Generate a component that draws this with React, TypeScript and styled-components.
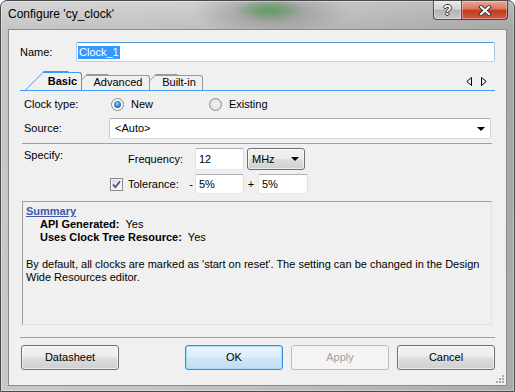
import React from "react";
import styled, { createGlobalStyle } from "styled-components";

const GlobalStyle = createGlobalStyle`
  html, body {
    margin: 0;
    padding: 0;
    background: #ffffff;
  }
  body {
    font-family: "Liberation Sans", Arial, sans-serif;
    font-size: 11px;
    line-height: 13px;
    color: #000;
  }
  * {
    box-sizing: border-box;
  }
`;

const Window = styled.div`
  width: 515px;
  height: 392px;
  display: flex;
  flex-direction: column;
  border: 1px solid #4a4a4a;
  border-radius: 7px 7px 0 0;
  overflow: hidden;
  background:
    radial-gradient(36px 11px at 268px 9px, rgba(86, 160, 86, 0.8), rgba(86, 160, 86, 0) 100%),
    radial-gradient(80px 26px at 270px 10px, rgba(70, 70, 70, 0.4), rgba(70, 70, 70, 0) 100%),
    linear-gradient(90deg, rgba(255, 255, 255, 0.12) 0%, rgba(255, 255, 255, 0) 45%, rgba(0, 0, 0, 0.12) 100%),
    linear-gradient(180deg, #d0d0d0 0px, #bdbdbd 30px, #c1c1c1 100%);
  box-shadow: inset 0 0 0 1px rgba(255, 255, 255, 0.35);
`;

const TitleBar = styled.div`
  flex: none;
  height: 28px;
  display: flex;
  justify-content: space-between;
  align-items: flex-start;
`;

const Title = styled.div`
  padding: 6px 0 0 7px;
  font-size: 12px;
  line-height: 14px;
  color: #000;
`;

const CaptionButtons = styled.div`
  display: flex;
  margin-right: 6px;
`;

const CaptionButton = styled.div<{ $close?: boolean }>`
  width: ${(p) => (p.$close ? 46 : 29)}px;
  height: 19px;
  display: flex;
  align-items: center;
  justify-content: center;
  border: 1px solid rgba(45, 45, 45, 0.8);
  border-top: none;
  border-left: ${(p) => (p.$close ? "none" : "1px solid rgba(45, 45, 45, 0.8)")};
  border-radius: ${(p) => (p.$close ? "0 0 4px 0" : "0 0 0 4px")};
  background: ${(p) =>
    p.$close
      ? "linear-gradient(180deg, #e9a896 0%, #d9735d 45%, #c13a20 52%, #cf5a43 100%)"
      : "linear-gradient(180deg, #e8e8e8 0%, #d3d3d3 45%, #b3b3b3 52%, #c9c9c9 100%)"};
  box-shadow: inset 0 0 0 1px rgba(255, 255, 255, 0.35);
  color: #fff;
  font-weight: 700;
  font-size: 14px;
  text-shadow: 1px 0 0 #333, -1px 0 0 #333, 0 1px 0 #333, 0 -1px 0 #333;
`;

const Client = styled.div`
  position: relative;
  flex: 1;
  margin: 0 7px 5px 7px;
  border: 1px solid #8c8c8c;
  background: #f0f0f0;
  display: flex;
  flex-direction: column;
`;

const NameRow = styled.div`
  display: flex;
  align-items: center;
  height: 20px;
  margin: 12px 0 0 11px;
`;

const NameLabel = styled.div`
  width: 56px;
`;

const TextBox = styled.div<{ $w?: number; $h?: number; $focus?: boolean; $pad?: number }>`
  width: ${(p) => (p.$w ? `${p.$w}px` : "auto")};
  flex: ${(p) => (p.$w ? "none" : 1)};
  height: ${(p) => p.$h ?? 20}px;
  display: flex;
  align-items: center;
  padding-left: ${(p) => p.$pad ?? 3}px;
  background: #fff;
  border: 1px solid;
  border-color: ${(p) =>
    p.$focus ? "#5b9bd5 #a8cbec #b7d4ee #a8cbec" : "#abadb3 #dbdfe6 #e3e9ef #e2e3ea"};
  border-radius: 2px;
`;

const Selected = styled.span`
  background: #3399ff;
  color: #fff;
  padding: 0 1px;
`;

const TabStrip = styled.div`
  display: flex;
  align-items: flex-end;
  width: 475px;
  height: 19px;
  margin: 10px 0 0 11px;
  padding-left: 5px;
  border-bottom: 1px solid #3d9cf0;
`;

const Tab = styled.div<{ $active?: boolean; $w: number; $h: number; $z: number; $ml: number }>`
  position: relative;
  z-index: ${(p) => p.$z};
  width: ${(p) => p.$w}px;
  height: ${(p) => p.$h}px;
  margin-left: ${(p) => p.$ml}px;
  padding-left: ${(p) => p.$h}px;
  padding-top: ${(p) => (p.$active ? 1 : 0)}px;
  display: flex;
  align-items: center;
  justify-content: center;
  font-weight: ${(p) => (p.$active ? 700 : 400)};

  &::before {
    content: "";
    position: absolute;
    left: 0;
    bottom: 0;
    width: ${(p) => p.$h + 6}px;
    height: 100%;
    background: #f0f0f0;
    border-left: 1px solid ${(p) => (p.$active ? "#3d9cf0" : "#9a9a9a")};
    border-top: 1px solid ${(p) => (p.$active ? "#3d9cf0" : "#9a9a9a")};
    transform-origin: bottom left;
    transform: skewX(-45deg);
  }

  &::after {
    content: "";
    position: absolute;
    top: 0;
    bottom: 0;
    left: ${(p) => p.$h}px;
    right: 0;
    background: #f0f0f0;
    border-top: 1px solid ${(p) => (p.$active ? "#3d9cf0" : "#9a9a9a")};
    border-right: 1px solid ${(p) => (p.$active ? "#3d9cf0" : "#9a9a9a")};
    border-top-right-radius: 3px;
  }
`;

const TabText = styled.span`
  position: relative;
  z-index: 1;
`;

const TabArrows = styled.div`
  display: flex;
  gap: 9px;
  margin-left: auto;
  margin-right: 8px;
  align-self: center;
`;

const Section = styled.div<{ $m?: string }>`
  display: flex;
  flex-direction: column;
  margin: ${(p) => p.$m ?? "0 14px 0 13px"};
`;

const FormRow = styled.div<{ $h: number; $mt: number }>`
  display: flex;
  align-items: center;
  height: ${(p) => p.$h}px;
  margin-top: ${(p) => p.$mt}px;
  padding-left: 2px;
`;

const FieldLabel = styled.div`
  width: 85px;
  flex: none;
`;

const RadioOption = styled.div<{ $w?: number }>`
  display: flex;
  align-items: center;
  gap: 7px;
  width: ${(p) => (p.$w ? `${p.$w}px` : "auto")};
  margin-left: 2px;
`;

const Radio = styled.span<{ $checked?: boolean }>`
  position: relative;
  width: 13px;
  height: 13px;
  border-radius: 50%;
  border: 1px solid #8a8a8a;
  background: ${(p) =>
    p.$checked
      ? "radial-gradient(circle at 50% 50%, #ffffff 0%, #f2f2f2 100%)"
      : "radial-gradient(circle at 50% 50%, #f4f4f4 0%, #e6e6e6 55%, #cfcfcf 100%)"};

  &::after {
    content: "";
    display: ${(p) => (p.$checked ? "block" : "none")};
    position: absolute;
    left: 2px;
    top: 2px;
    width: 7px;
    height: 7px;
    border-radius: 50%;
    background: radial-gradient(circle at 45% 40%, #9fd2ff 0%, #3b86c9 45%, #154f87 100%);
  }
`;

const Caret = styled.span`
  width: 0;
  height: 0;
  border-left: 4px solid transparent;
  border-right: 4px solid transparent;
  border-top: 4px solid #000;
  margin-left: auto;
  margin-right: 5px;
`;

const ComboBox = styled.div`
  flex: 1;
  height: 21px;
  display: flex;
  align-items: center;
  padding-left: 5px;
  margin-right: 1px;
  background: #fff;
  border: 1px solid;
  border-color: #acacac #d5d5d5 #dadada #c9c9c9;
  border-radius: 2px;
`;

const Separator = styled.div<{ $mt: number }>`
  height: 1px;
  margin-top: ${(p) => p.$mt}px;
  background: #a0a0a0;
`;

const SpecifyBlock = styled.div`
  display: flex;
  margin-top: 4px;
  padding-left: 2px;
`;

const SpecifyLabel = styled.div`
  width: 86px;
  flex: none;
  padding-top: 1px;
`;

const SpecifyRows = styled.div`
  display: flex;
  flex-direction: column;
  gap: 4px;
`;

const SpecRow = styled.div<{ $h: number }>`
  display: flex;
  align-items: center;
  height: ${(p) => p.$h}px;
`;

const SpecLabel = styled.div<{ $w: number }>`
  width: ${(p) => p.$w}px;
  flex: none;
`;

const Sign = styled.div<{ $w: number }>`
  width: ${(p) => p.$w}px;
  flex: none;
  text-align: center;
`;

const Checkbox = styled.span`
  width: 13px;
  height: 13px;
  margin-right: 5px;
  display: flex;
  align-items: center;
  justify-content: center;
  border: 1px solid #8a8a8a;
  background: linear-gradient(135deg, #d6d6d6 0%, #f0f0f0 60%, #fdfdfd 100%);
  box-shadow: inset 0 0 0 1px #f6f6f6;
`;

const DropButton = styled.div`
  width: 58px;
  height: 22px;
  margin-left: 3px;
  display: flex;
  align-items: center;
  padding-left: 4px;
  border: 1px solid #707070;
  border-radius: 3px;
  background: linear-gradient(180deg, #f2f2f2 0%, #ebebeb 48%, #dddddd 52%, #cfcfcf 100%);
  box-shadow: inset 0 0 0 1px rgba(255, 255, 255, 0.6);
`;

const SummaryBox = styled.div`
  height: 124px;
  margin-top: 7px;
  padding: 3px 3px 0 3px;
  border: 1px solid;
  border-color: #a0a0a0 #e3e3e3 #e3e3e3 #a0a0a0;
`;

const SummaryTitle = styled.div`
  font-weight: 700;
  color: #3d5aa8;
  text-decoration: underline;
`;

const SummaryLine = styled.div`
  padding-left: 14px;
`;

const Strong = styled.span`
  font-weight: 700;
  margin-right: 6px;
`;

const Paragraph = styled.p`
  margin: 14px 0 0 0;
  max-width: 460px;
`;

const ButtonRow = styled.div`
  display: flex;
  align-items: center;
  margin: 7px 11px 0 12px;
`;

const ButtonGroup = styled.div`
  display: flex;
  gap: 8px;
  margin-left: auto;
`;

const Button = styled.div<{ $variant?: "default" | "disabled" }>`
  width: 98px;
  height: 25px;
  display: flex;
  align-items: center;
  justify-content: center;
  border-radius: 3px;
  border: 1px solid
    ${(p) => (p.$variant === "default" ? "#3c8fd6" : p.$variant === "disabled" ? "#b8bcbf" : "#707070")};
  color: ${(p) => (p.$variant === "disabled" ? "#a0a0a0" : "#000")};
  background: ${(p) =>
    p.$variant === "default"
      ? "linear-gradient(180deg, #eaf5fd 0%, #dcedfb 48%, #cde5f7 52%, #c1def5 100%)"
      : p.$variant === "disabled"
      ? "#f4f4f4"
      : "linear-gradient(180deg, #f2f2f2 0%, #ebebeb 48%, #dddddd 52%, #cfcfcf 100%)"};
  box-shadow: ${(p) =>
    p.$variant === "default"
      ? "inset 0 0 0 1px #a9dbf6"
      : p.$variant === "disabled"
      ? "none"
      : "inset 0 0 0 1px rgba(255, 255, 255, 0.6)"};
`;

const Grip = styled.svg`
  position: absolute;
  right: 1px;
  bottom: 1px;
`;

const CloseGlyph = () => (
  <svg width="14" height="11" viewBox="0 0 14 11">
    <path d="M3 2 L11 9 M11 2 L3 9" stroke="#3a3a3a" strokeWidth="4" strokeLinecap="square" />
    <path d="M3 2 L11 9 M11 2 L3 9" stroke="#ffffff" strokeWidth="2" strokeLinecap="square" />
  </svg>
);

const ArrowLeft = () => (
  <svg width="6" height="9" viewBox="0 0 6 9">
    <path d="M5.5 0.5 L0.8 4.5 L5.5 8.5 Z" fill="none" stroke="#000" strokeWidth="1" />
  </svg>
);

const ArrowRight = () => (
  <svg width="6" height="9" viewBox="0 0 6 9">
    <path d="M0.5 0.5 L5.2 4.5 L0.5 8.5 Z" fill="none" stroke="#000" strokeWidth="1" />
  </svg>
);

const CheckMark = () => (
  <svg width="9" height="9" viewBox="0 0 9 9">
    <path d="M1 4.5 L3.4 7.2 L8 1.2" fill="none" stroke="#40558a" strokeWidth="1.8" />
  </svg>
);

export default function App() {
  return (
    <>
      <GlobalStyle />
      <Window>
        <TitleBar>
          <Title>Configure 'cy_clock'</Title>
          <CaptionButtons>
            <CaptionButton>?</CaptionButton>
            <CaptionButton $close>
              <CloseGlyph />
            </CaptionButton>
          </CaptionButtons>
        </TitleBar>

        <Client>
          <NameRow>
            <NameLabel>Name:</NameLabel>
            <TextBox $w={419} $focus $pad={1}>
              <Selected>Clock_1</Selected>
            </TextBox>
          </NameRow>

          <TabStrip>
            <Tab $active $w={57} $h={18} $z={3} $ml={0}>
              <TabText>Basic</TabText>
            </Tab>
            <Tab $w={79} $h={15} $z={2} $ml={-11}>
              <TabText>Advanced</TabText>
            </Tab>
            <Tab $w={63} $h={15} $z={1} $ml={-10}>
              <TabText>Built-in</TabText>
            </Tab>
            <TabArrows>
              <ArrowLeft />
              <ArrowRight />
            </TabArrows>
          </TabStrip>

          <Section>
            <FormRow $h={20} $mt={3}>
              <FieldLabel>Clock type:</FieldLabel>
              <RadioOption $w={96}>
                <Radio $checked />
                <span>New</span>
              </RadioOption>
              <RadioOption>
                <Radio />
                <span>Existing</span>
              </RadioOption>
            </FormRow>

            <FormRow $h={21} $mt={4}>
              <FieldLabel>Source:</FieldLabel>
              <ComboBox>
                &lt;Auto&gt;
                <Caret />
              </ComboBox>
            </FormRow>

            <Separator $mt={4} />

            <SpecifyBlock>
              <SpecifyLabel>Specify:</SpecifyLabel>
              <SpecifyRows>
                <SpecRow $h={22}>
                  <SpecLabel $w={18} />
                  <SpecLabel $w={67}>Frequency:</SpecLabel>
                  <TextBox $w={49} $h={22}>12</TextBox>
                  <DropButton>
                    MHz
                    <Caret />
                  </DropButton>
                </SpecRow>
                <SpecRow $h={20}>
                  <Checkbox>
                    <CheckMark />
                  </Checkbox>
                  <SpecLabel $w={59}>Tolerance:</SpecLabel>
                  <Sign $w={8}>-</Sign>
                  <TextBox $w={49}>5%</TextBox>
                  <Sign $w={14}>+</Sign>
                  <TextBox $w={50}>5%</TextBox>
                </SpecRow>
              </SpecifyRows>
            </SpecifyBlock>

            <SummaryBox>
              <SummaryTitle>Summary</SummaryTitle>
              <SummaryLine>
                <Strong>API Generated:</Strong>Yes
              </SummaryLine>
              <SummaryLine>
                <Strong>Uses Clock Tree Resource:</Strong>Yes
              </SummaryLine>
              <Paragraph>
                By default, all clocks are marked as 'start on reset'. The setting can be changed in the
                Design Wide Resources editor.
              </Paragraph>
            </SummaryBox>
          </Section>

          <Section $m="12px 11px 0 11px">
            <Separator $mt={0} />
          </Section>

          <ButtonRow>
            <Button>Datasheet</Button>
            <ButtonGroup>
              <Button $variant="default">OK</Button>
              <Button $variant="disabled">Apply</Button>
              <Button>Cancel</Button>
            </ButtonGroup>
          </ButtonRow>

          <Grip width="10" height="10" viewBox="0 0 10 10">
            <g fill="#a8a8a8">
              <rect x="7" y="1" width="2" height="2" />
              <rect x="4" y="4" width="2" height="2" />
              <rect x="7" y="4" width="2" height="2" />
              <rect x="1" y="7" width="2" height="2" />
              <rect x="4" y="7" width="2" height="2" />
              <rect x="7" y="7" width="2" height="2" />
            </g>
          </Grip>
        </Client>
      </Window>
    </>
  );
}
